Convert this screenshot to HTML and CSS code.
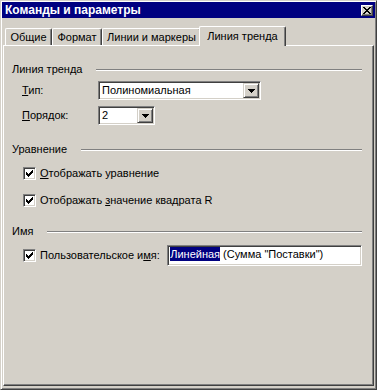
FILE: index.html
```html
<!DOCTYPE html>
<html lang="ru">
<head>
    <meta charset="UTF-8">
    <title>Команды и параметры</title>
    <link rel="stylesheet" href="styles.css">
</head>
<body>

    <div class="window">

        <div class="titlebar">
            <span class="title">Команды и параметры</span>
            <span class="close-btn">
                <svg width="8" height="7" viewBox="0 0 8 7" shape-rendering="crispEdges">
                    <path d="M0 0h2v1h1v1h2v-1h1v-1h2v1h-1v1h-1v1h-1v1h1v1h1v1h1v1h-2v-1h-1v-1h-2v1h-1v1h-2v-1h1v-1h1v-1h1v-1h-1v-1h-1z" fill="#000"/>
                </svg>
            </span>
        </div>

        <div class="tabs">
            <div class="tab tab-general">Общие</div>
            <div class="tab tab-format">Формат</div>
            <div class="tab tab-markers">Линии и маркеры</div>
            <div class="tab tab-trend active">Линия тренда</div>
        </div>

        <div class="page">

            <!-- Линия тренда -->
            <div class="group-title group-trend">Линия тренда</div>
            <div class="row row-type">
                <span class="field-label"><u>Т</u>ип:</span>
                <div class="combo combo-type">
                    <span class="combo-value">Полиномиальная</span>
                    <span class="combo-btn">
                        <svg width="7" height="4" viewBox="0 0 7 4" shape-rendering="crispEdges"><path d="M0 0h7v1h-1v1h-1v1h-1v1h-1v-1h-1v-1h-1v-1h-1z" fill="#000"/></svg>
                    </span>
                </div>
            </div>
            <div class="row row-order">
                <span class="field-label"><u>П</u>орядок:</span>
                <div class="combo combo-order">
                    <span class="combo-value">2</span>
                    <span class="combo-btn">
                        <svg width="7" height="4" viewBox="0 0 7 4" shape-rendering="crispEdges"><path d="M0 0h7v1h-1v1h-1v1h-1v1h-1v-1h-1v-1h-1v-1h-1z" fill="#000"/></svg>
                    </span>
                </div>
            </div>

            <!-- Уравнение -->
            <div class="group-title group-equation">Уравнение</div>
            <div class="check-row check-first">
                <span class="checkbox">
                    <svg width="7" height="7" viewBox="0 0 7 7" shape-rendering="crispEdges"><path d="M0 2h1v3H0zM1 3h1v3H1zM2 4h1v3H2zM3 3h1v3H3zM4 2h1v3H4zM5 1h1v3H5zM6 0h1v3H6z" fill="#000"/></svg>
                </span>
                <span class="check-label"><u>О</u>тображать уравнение</span>
            </div>
            <div class="check-row check-second">
                <span class="checkbox">
                    <svg width="7" height="7" viewBox="0 0 7 7" shape-rendering="crispEdges"><path d="M0 2h1v3H0zM1 3h1v3H1zM2 4h1v3H2zM3 3h1v3H3zM4 2h1v3H4zM5 1h1v3H5zM6 0h1v3H6z" fill="#000"/></svg>
                </span>
                <span class="check-label">Отображать <u>з</u>начение квадрата R</span>
            </div>

            <!-- Имя -->
            <div class="group-title group-name">Имя</div>
            <div class="check-row name-row">
                <span class="checkbox">
                    <svg width="7" height="7" viewBox="0 0 7 7" shape-rendering="crispEdges"><path d="M0 2h1v3H0zM1 3h1v3H1zM2 4h1v3H2zM3 3h1v3H3zM4 2h1v3H4zM5 1h1v3H5zM6 0h1v3H6z" fill="#000"/></svg>
                </span>
                <span class="check-label name-label">Пользовательское и<u>м</u>я:</span>
                <div class="textbox"><span class="selected">Линейная</span> (Сумма "Поставки")</div>
            </div>

        </div>

    </div>

</body>
</html>
```

FILE: styles.css
```css
body {
    margin: 0;
    padding: 0;
    font-family: "Liberation Sans", Arial, sans-serif;
    font-size: 11px;
    color: #000;
    background: #d4d0c8;
}

u {
    text-decoration: underline;
    text-underline-offset: 1px;
}

/* --- Window frame --- */
.window {
    width: 377px;
    height: 390px;
    box-sizing: border-box;
    background: #d4d0c8;
    border: 1px solid;
    border-color: #d4d0c8 #404040 #404040 #d4d0c8;
    box-shadow: inset 1px 1px #fff, inset -1px -1px #808080;
    padding: 1px;
    display: flex;
    flex-direction: column;
}

.titlebar {
    height: 16px;
    flex: none;
    background: #000080;
    display: flex;
    align-items: center;
    justify-content: space-between;
    padding: 0 2px 0 3px;
}

.title {
    color: #fff;
    font-weight: bold;
    font-size: 12px;
    line-height: 15px;
    padding-top: 1px;
}

.close-btn {
    width: 12px;
    height: 11px;
    box-sizing: border-box;
    background: #d4d0c8;
    border: 1px solid;
    border-color: #fff #404040 #404040 #fff;
    box-shadow: inset -1px -1px #808080;
    display: flex;
    align-items: center;
    justify-content: center;
}

/* --- Tabs --- */
.tabs {
    height: 27px;
    flex: none;
    display: flex;
    align-items: flex-end;
    padding-left: 3px;
}

.tab {
    height: 17px;
    box-sizing: border-box;
    border-top: 1px solid #fff;
    border-left: 1px solid #fff;
    border-right: 1px solid #404040;
    box-shadow: inset -1px 0 #808080;
    border-radius: 2px 2px 0 0;
    text-align: center;
    line-height: 13px;
    padding-top: 2px;
    white-space: nowrap;
}

.tab-general { width: 47px; }
.tab-format { width: 50px; }
.tab-markers { width: 99px; }

.tab.active {
    position: relative;
    z-index: 1;
    width: 87px;
    height: 20px;
    margin: 0 -2px -1px -2px;
    padding-top: 3px;
    background: #d4d0c8;
}

/* --- Tab page --- */
.page {
    flex: 1;
    margin: 0 1px 2px 1px;
    border: 1px solid;
    border-color: #fff #404040 #404040 #fff;
    box-shadow: inset -1px -1px #808080;
    padding: 17px 11px 0 8px;
}

.group-title {
    display: flex;
    align-items: center;
    height: 13px;
    line-height: 13px;
    white-space: nowrap;
}

.group-title::after {
    content: "";
    flex: 1;
    height: 0;
    border-top: 1px solid #808080;
    border-bottom: 1px solid #fff;
    margin-left: 14px;
}

.group-equation { margin-top: 18px; }
.group-name { margin-top: 18px; }

.row {
    display: flex;
    align-items: center;
    padding-left: 10px;
    line-height: 13px;
}

.row-type { margin-top: 5px; }
.row-order { margin-top: 6px; }

.field-label {
    width: 76px;
}

/* sunken field */
.combo,
.textbox {
    box-sizing: border-box;
    background: #fff;
    border: 1px solid;
    border-color: #808080 #fff #fff #808080;
    box-shadow: inset 1px 1px #404040, inset -1px -1px #d4d0c8;
}

.combo {
    height: 19px;
    display: flex;
    align-items: center;
    padding: 1px;
}

.combo-type { width: 163px; }
.combo-order { width: 57px; }

.combo-value {
    flex: 1;
    padding-left: 2px;
    line-height: 13px;
}

.combo-btn {
    width: 16px;
    height: 15px;
    box-sizing: border-box;
    background: #d4d0c8;
    border: 1px solid;
    border-color: #d4d0c8 #404040 #404040 #d4d0c8;
    box-shadow: inset 1px 1px #fff, inset -1px -1px #808080;
    display: flex;
    align-items: center;
    justify-content: center;
}

/* --- Checkboxes --- */
.check-row {
    display: flex;
    align-items: center;
    padding-left: 11px;
    line-height: 13px;
}

.check-first { margin-top: 11px; }
.check-second { margin-top: 14px; }

.checkbox {
    width: 13px;
    height: 13px;
    flex: none;
    box-sizing: border-box;
    background: #fff;
    border: 1px solid;
    border-color: #808080 #fff #fff #808080;
    box-shadow: inset 1px 1px #404040, inset -1px -1px #d4d0c8;
    display: flex;
    align-items: center;
    justify-content: center;
}

.check-label {
    margin-left: 4px;
    white-space: nowrap;
}

.name-row {
    margin-top: 7px;
    height: 21px;
}

.name-label {
    width: 128px;
}

.textbox {
    width: 196px;
    height: 21px;
    padding: 1px 2px;
    line-height: 14px;
    white-space: nowrap;
}

.selected {
    background: #000080;
    color: #fff;
    display: inline-block;
    line-height: 14px;
}
```
